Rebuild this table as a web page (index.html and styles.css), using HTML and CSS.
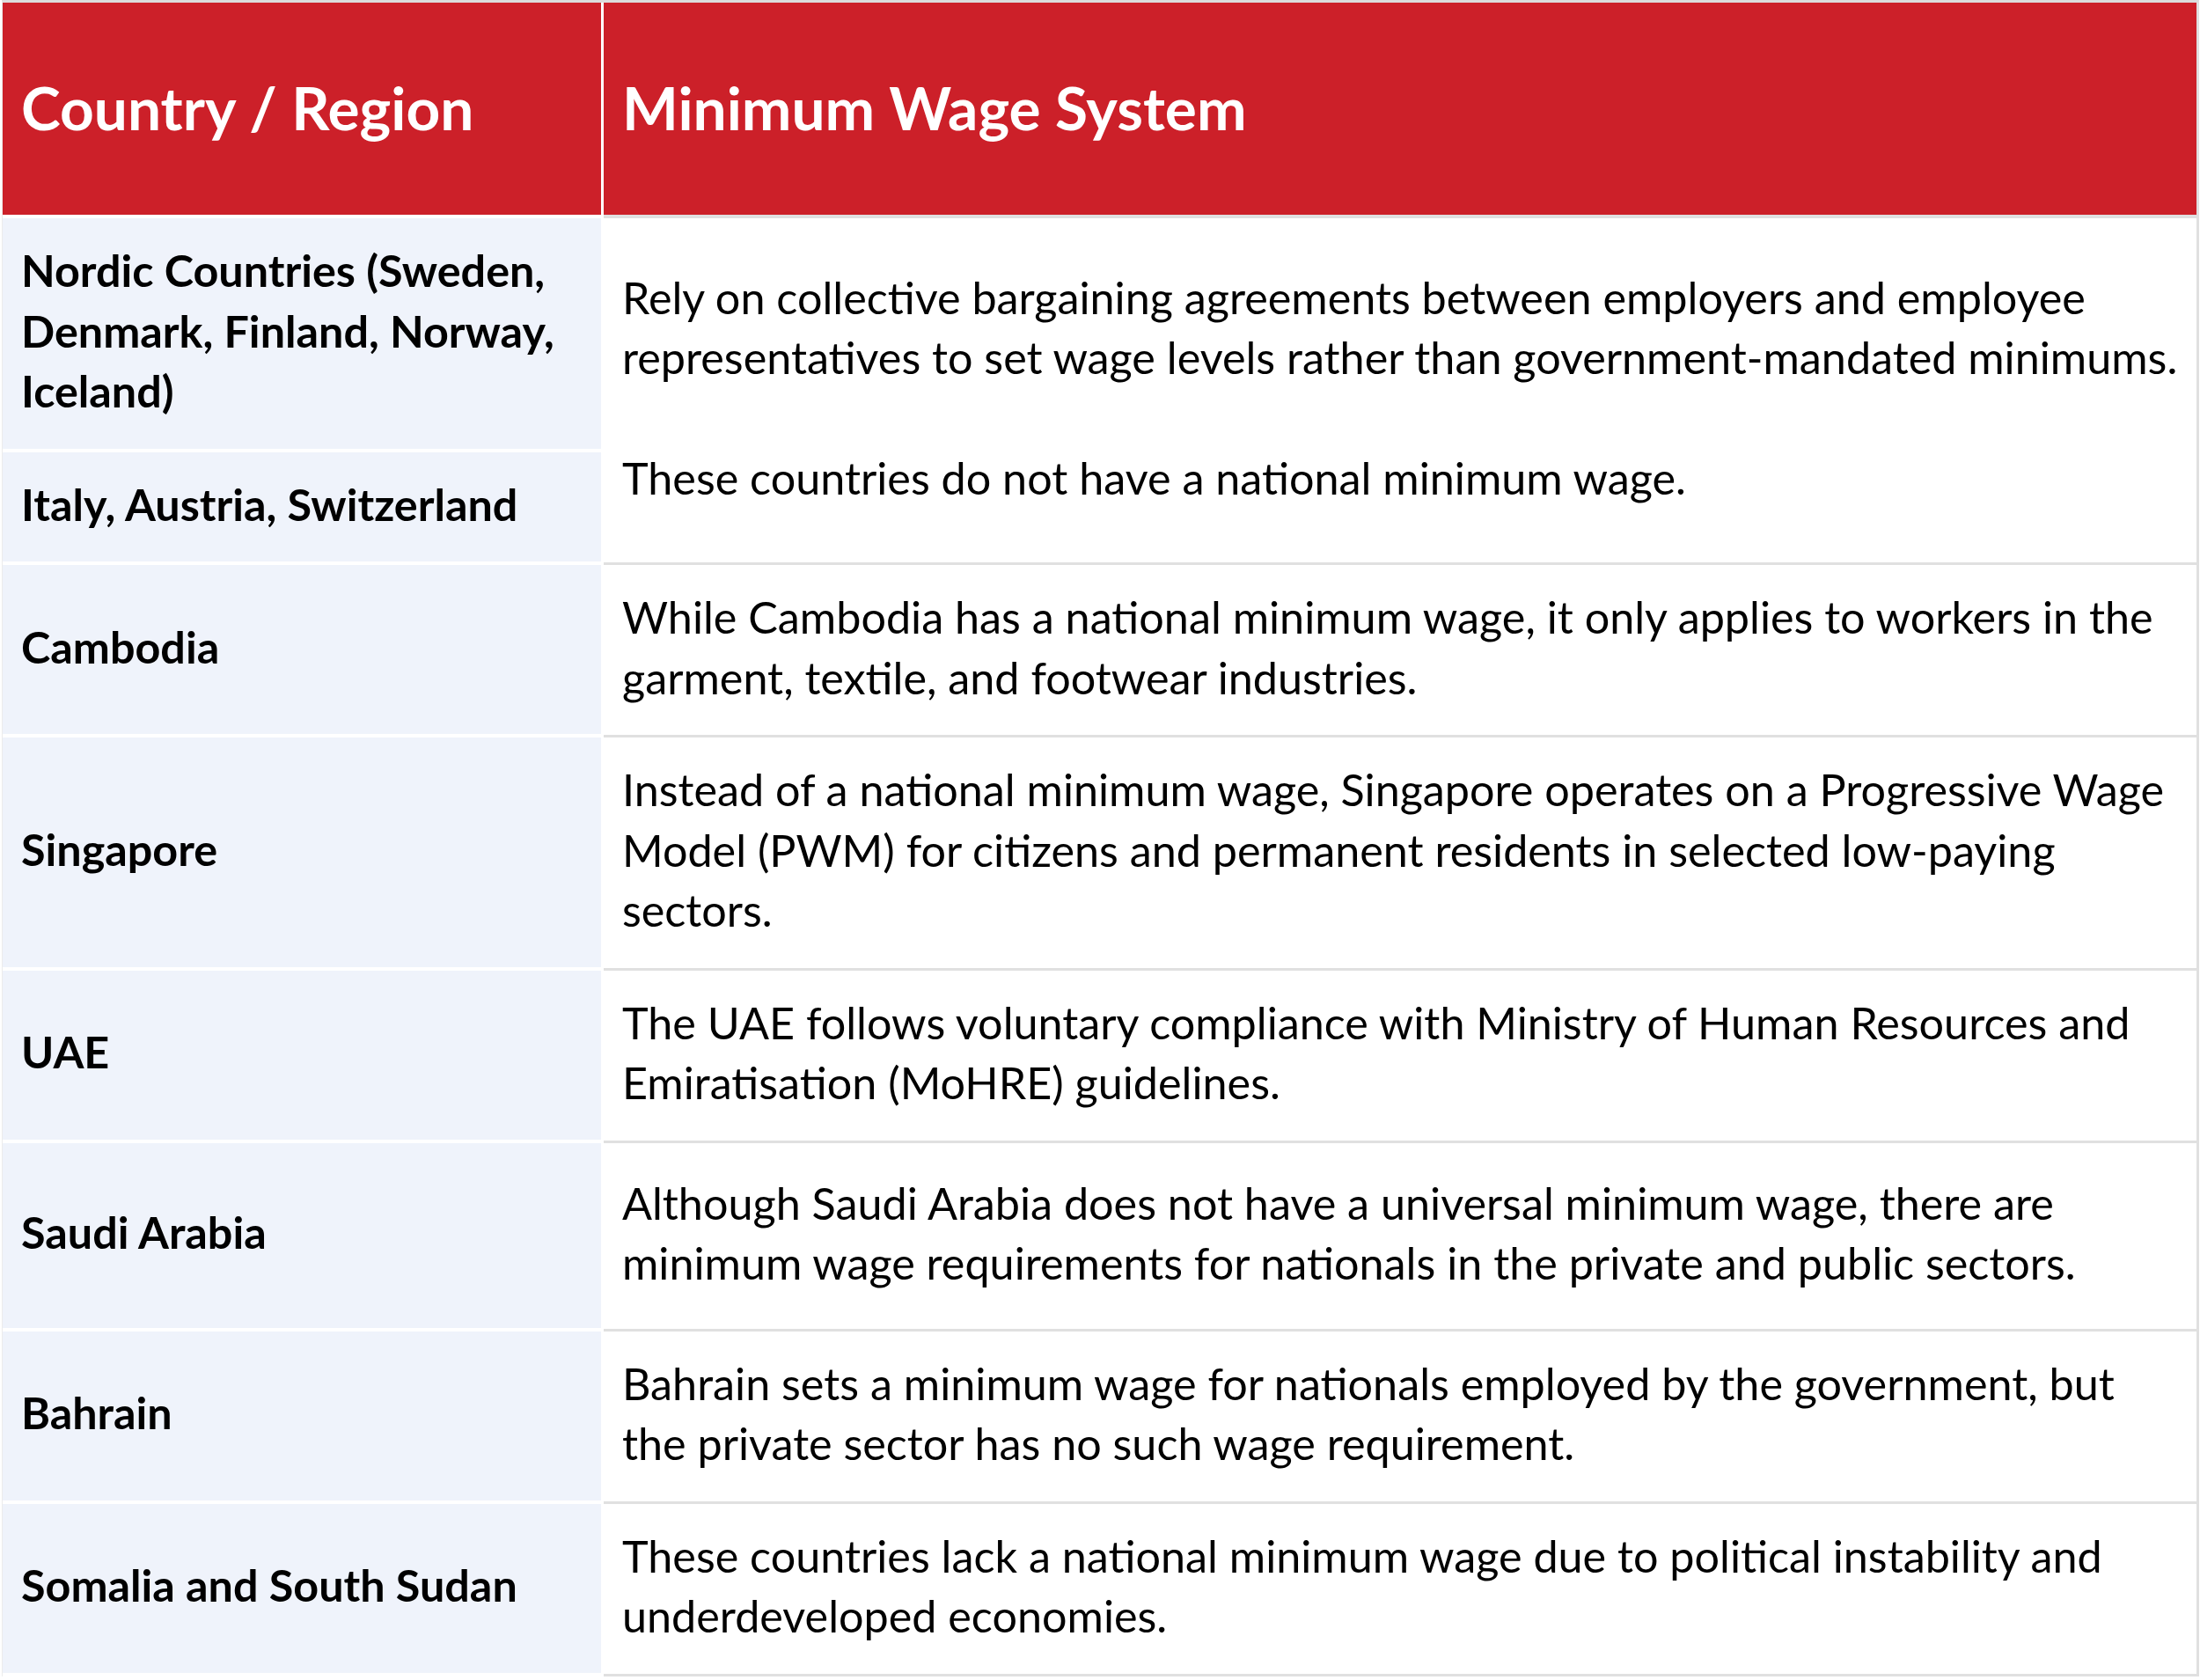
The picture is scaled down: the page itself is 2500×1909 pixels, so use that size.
FILE: index.html
```html
<!DOCTYPE html>
<html lang="en">
<head>
<meta charset="utf-8">
<title>Minimum Wage Systems</title>
<link rel="stylesheet" href="styles.css">
</head>
<body>
<div class="wage-table">
  <div class="head head-left">Country / Region</div>
  <div class="head head-right">Minimum Wage System</div>

  <div class="cell country">Nordic Countries (Sweden, Denmark, Finland, Norway, Iceland)</div>
  <div class="cell system span-2">
    <p>Rely on collective bargaining agreements between employers and employee representatives to set wage levels rather than government-mandated minimums.<br><br>These countries do not have a national minimum wage.</p>
  </div>
  <div class="cell country">Italy, Austria, Switzerland</div>

  <div class="cell country">Cambodia</div>
  <div class="cell system"><p>While Cambodia has a national minimum wage, it only applies to workers in the garment, textile, and footwear industries.</p></div>

  <div class="cell country">Singapore</div>
  <div class="cell system"><p>Instead of a national minimum wage, Singapore operates on a Progressive Wage Model (PWM) for citizens and permanent residents in selected low-paying sectors.</p></div>

  <div class="cell country">UAE</div>
  <div class="cell system"><p>The UAE follows voluntary compliance with Ministry of Human Resources and Emiratisation (MoHRE) guidelines.</p></div>

  <div class="cell country">Saudi Arabia</div>
  <div class="cell system tall"><p>Although Saudi Arabia does not have a universal minimum wage, there are minimum wage requirements for nationals in the private and public sectors.</p></div>

  <div class="cell country">Bahrain</div>
  <div class="cell system"><p>Bahrain sets a minimum wage for nationals employed by the government, but the private sector has no such wage requirement.</p></div>

  <div class="cell country">Somalia and South Sudan</div>
  <div class="cell system"><p>These countries lack a national minimum wage due to political instability and underdeveloped economies.</p></div>
</div>
</body>
</html>
```

FILE: styles.css
```css
* {
  box-sizing: border-box;
}

html, body {
  margin: 0;
  padding: 0;
  background: #ffffff;
}

body {
  font-family: Lato, "Liberation Sans", sans-serif;
  color: #000000;
}

.wage-table {
  width: 2497px;
  margin-left: 2px;
  border-top: 3px solid #dcdcdc;
  border-left: 1px solid #ececec;
  border-right: 3px solid #e0e0e0;
  display: grid;
  grid-template-columns: 680px 1fr;
  column-gap: 3px;
}

.head {
  background: #cc2029;
  color: #ffffff;
  font-weight: 700;
  font-size: 67.6px;
  line-height: 95px;
  padding: 71px 21px 75px;
  background-clip: padding-box;
}

.head-left {
  border-bottom: 4px solid #ffffff;
}

.head-right {
  border-bottom: 4px solid #e0e0e0;
}

.cell {
  display: flex;
  align-items: center;
  font-size: 50.3px;
  line-height: 68.5px;
  padding: 25px 21px 31px;
}

.cell p {
  margin: 0;
}

.country {
  background: #eff3fb;
  background-clip: padding-box;
  font-weight: 700;
  border-bottom: 4px solid #ffffff;
}

.system {
  background: #ffffff;
  font-weight: 400;
  padding-right: 14px;
  border-bottom: 3px solid #e0e0e0;
}

.system.tall {
  padding-top: 34px;
  padding-bottom: 40px;
}

.span-2 {
  grid-row: span 2;
}
```
